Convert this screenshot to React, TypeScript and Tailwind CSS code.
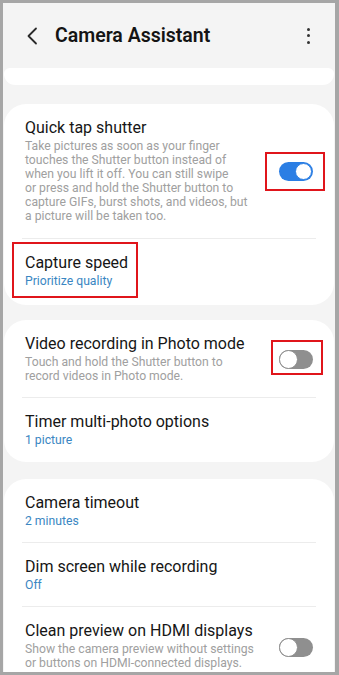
import React from 'react';

const Toggle = ({ on }: { on: boolean }) =>
  on ? (
    <div className="w-[34px] h-[19px] rounded-full bg-[#2b7ee4] flex items-center justify-end pr-[1px]">
      <div className="w-[17px] h-[17px] rounded-full bg-white border-[1.5px] border-[#2b7ee4]" />
    </div>
  ) : (
    <div className="w-[34px] h-[19px] rounded-full bg-[#8f8f8f] flex items-center justify-start">
      <div className="w-[19px] h-[19px] rounded-full bg-white border-[1.5px] border-[#8f8f8f]" />
    </div>
  );

const Divider = () => <div className="mx-[18px] h-px bg-[#ececec]" />;

const Row = ({ title, sub, desc, toggle, pt = 'pt-[14px]', pb = 'pb-[14px]' }: { title: string; sub?: string; desc?: React.ReactNode; toggle?: React.ReactNode; pt?: string; pb?: string }) => (
  <div className={`flex items-center pl-[21px] pr-[21px] ${pt} ${pb}`}>
    <div className="flex-1">
      <div className="text-[16px] leading-[20px] text-[#161616]">{title}</div>
      {sub && <div className="text-[12.2px] leading-[16px] text-[#3a86c2]">{sub}</div>}
      {desc && <div className="text-[12.2px] leading-[14px] text-[#a0a0a0] mt-[1px]">{desc}</div>}
    </div>
    {toggle}
  </div>
);

export default function App() {
  return (
    <div className="w-[339px] h-[675px] bg-[#a6a6a6] pt-[3px] pl-[3px] pr-[4px] pb-[3px] overflow-hidden" style={{ fontFamily: 'Roboto, "Noto Sans", sans-serif' }}>
      <div className="h-full bg-[#f4f4f4] overflow-hidden flex flex-col px-[1px]">
        <header className="h-[65px] shrink-0 flex items-center pl-[22px] pr-[24px]">
          <svg width="12" height="18" viewBox="0 0 12 18" className="mr-[17px]">
            <path d="M10 1.5 L2.5 9 L10 16.5" fill="none" stroke="#2a2a2a" strokeWidth="1.8" strokeLinecap="round" strokeLinejoin="round" />
          </svg>
          <h1 className="flex-1 text-[19.5px] font-semibold text-[#141414]">Camera Assistant</h1>
          <div className="flex flex-col gap-[3.5px] items-center">
            <div className="w-[3px] h-[3px] rounded-full bg-[#333]" />
            <div className="w-[3px] h-[3px] rounded-full bg-[#333]" />
            <div className="w-[3px] h-[3px] rounded-full bg-[#333]" />
          </div>
        </header>

        <div className="h-[17px] shrink-0 bg-white rounded-t-[10px] rounded-b-[20px]" />

        <div className="mt-[19px] bg-white rounded-[22px] shrink-0">
          <Row
            title="Quick tap shutter"
            pt="pt-[14px]"
            pb="pb-[15px]"
            desc={
              <>
                Take pictures as soon as your finger<br />
                touches the Shutter button instead of<br />
                when you lift it off. You can still swipe<br />
                or press and hold the Shutter button to<br />
                capture GIFs, burst shots, and videos, but<br />
                a picture will be taken too.
              </>
            }
            toggle={
              <div className="relative self-start mt-[44px]">
                <Toggle on />
                <div className="absolute left-[-14px] right-[-12px] top-[-10px] bottom-[-10px] border-[2.5px] border-[#e0151b]" />
              </div>
            }
          />
          <Divider />
          <div className="relative">
            <Row title="Capture speed" sub="Prioritize quality" pt="pt-[14px]" pb="pb-[16px]" />
            <div className="absolute left-[8px] w-[126px] top-[3px] h-[56px] border-[2.5px] border-[#e0151b]" />
          </div>
        </div>

        <div className="mt-[15px] bg-white rounded-[22px] shrink-0">
          <Row
            title="Video recording in Photo mode"
            desc={
              <>
                Touch and hold the Shutter button to<br />
                record videos in Photo mode.
              </>
            }
            toggle={
              <div className="relative self-start mt-[16px]">
                <Toggle on={false} />
                <div className="absolute left-[-8px] right-[-10px] top-[-10px] bottom-[-6px] border-[2.5px] border-[#e0151b]" />
              </div>
            }
          />
          <Divider />
          <Row title="Timer multi-photo options" sub="1 picture" />
        </div>

        <div className="mt-[17px] bg-white rounded-t-[22px] flex-1">
          <Row title="Camera timeout" sub="2 minutes" pb="pb-[13px]" />
          <Divider />
          <Row title="Dim screen while recording" sub="Off" pb="pb-[13px]" />
          <Divider />
          <Row
            title="Clean preview on HDMI displays"
            desc={
              <>
                Show the camera preview without settings<br />
                or buttons on HDMI-connected displays.
              </>
            }
            toggle={<div className="self-start mt-[17px]"><Toggle on={false} /></div>}
          />
        </div>
      </div>
    </div>
  );
}
